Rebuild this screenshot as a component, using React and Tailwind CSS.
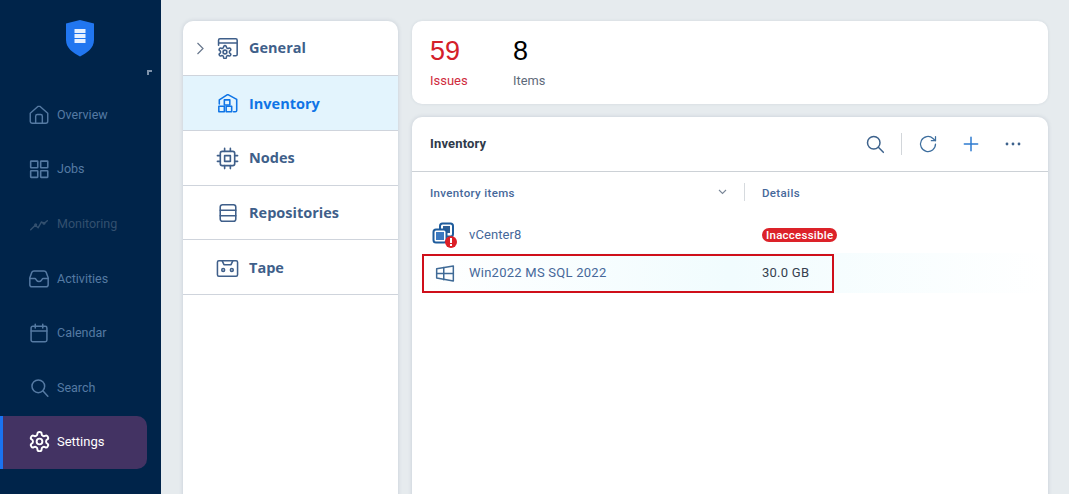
import React from "react";

const S = ({ children, size = 24, sw = 1.6, className = "" }) => (
  <svg width={size} height={size} viewBox="0 0 24 24" fill="none" stroke="currentColor" strokeWidth={sw} strokeLinecap="round" strokeLinejoin="round" className={className}>
    {children}
  </svg>
);

const GearPath = "M12.22 2h-.44a2 2 0 0 0-2 2v.18a2 2 0 0 1-1 1.73l-.43.25a2 2 0 0 1-2 0l-.15-.08a2 2 0 0 0-2.73.73l-.22.38a2 2 0 0 0 .73 2.73l.15.1a2 2 0 0 1 1 1.72v.51a2 2 0 0 1-1 1.74l-.15.09a2 2 0 0 0-.73 2.73l.22.38a2 2 0 0 0 2.73.73l.15-.08a2 2 0 0 1 2 0l.43.25a2 2 0 0 1 1 1.73V20a2 2 0 0 0 2 2h.44a2 2 0 0 0 2-2v-.18a2 2 0 0 1 1-1.73l.43-.25a2 2 0 0 1 2 0l.15.08a2 2 0 0 0 2.73-.73l.22-.39a2 2 0 0 0-.73-2.73l-.15-.08a2 2 0 0 1-1-1.74v-.5a2 2 0 0 1 1-1.74l.15-.09a2 2 0 0 0 .73-2.73l-.22-.38a2 2 0 0 0-2.73-.73l-.15.08a2 2 0 0 1-2 0l-.43-.25a2 2 0 0 1-1-1.73V4a2 2 0 0 0-2-2z";

const nav = [
  { label: "Overview", color: "text-[#557aa3]", icon: <S size={21} sw={1.7}><path d="M1.5 10.500 11 2.200h2l9.500 8.300V20a2.500 2.500 0 0 1-2.500 2.500H4A2.500 2.500 0 0 1 1.500 20z" /><path d="M8 22.500V14a2 2 0 0 1 2-2h4a2 2 0 0 1 2 2v8.500" /></S> },
  { label: "Jobs", color: "text-[#557aa3]", icon: <S size={20} sw={1.9}><rect x="2" y="2.500" width="8.500" height="8" rx=".6" /><rect x="14" y="2.500" width="8.500" height="8" rx=".6" /><rect x="2" y="14" width="8.500" height="8" rx=".6" /><rect x="14" y="14" width="8.500" height="8" rx=".6" /></S> },
  { label: "Monitoring", color: "text-[#33506f]", icon: <S size={20} sw={1.7}><path d="M2 19 7.500 13.500 11 16.500 15 9.500 18 11.500 22 8" /><circle cx="8" cy="13" r="1" /><circle cx="18" cy="11" r="1" /></S> },
  { label: "Activities", shift: "translate-y-px", color: "text-[#557aa3]", icon: <S size={21} sw={1.8}><path d="M6 3h12a3 3 0 0 1 2.700 1.700L23 11v8.500a2.500 2.500 0 0 1-2.500 2.500h-17A2.500 2.500 0 0 1 1 19.500V11l2.300-6.300A3 3 0 0 1 6 3z" /><path d="M1 12h6c1 0 1.300 1 2 2s1 1.500 3 1.500 2.300-.5 3-1.500 1-2 2-2h6" /></S> },
  { label: "Calendar", color: "text-[#557aa3]", icon: <S size={20} sw={1.8}><rect x="2.500" y="4" width="19" height="18.500" rx="2" /><path d="M2.500 9.500h19M7.500 1.500V6M16.500 1.500V6" /></S> },
  { label: "Search", shift: "translate-y-px", color: "text-[#557aa3]", icon: <S size={19} sw={1.9}><circle cx="10.500" cy="10.500" r="8" /><path d="m16.500 16.500 6 6.500" /></S> },
];

const Item = ({ label, color, icon, shift = "" }) => (
  <div className={`flex h-[54.6px] items-center pl-[29px] ${color}`}>
    <span className="flex w-[20px] justify-center">{icon}</span>
    <span className={`ml-[8px] text-[12.5px] ${shift}`}>{label}</span>
  </div>
);

const panelRows = [
  { label: "General", h: "h-[55px]", chevron: true, icon: <S size={22} sw={1.700}><path d="M1.700 9V3.500A1.500 1.500 0 0 1 3.200 2h17.300A1.500 1.500 0 0 1 22 3.500v15.500a1.500 1.500 0 0 1-1.500 1.500H18M1.700 6.500H22" /><g transform="translate(.3 8) scale(.7)" strokeWidth="2.400"><path d={GearPath} /><circle cx="12" cy="12" r="3" /></g></S> },
  { label: "Inventory", h: "h-[55px] pt-[2px]", active: true, icon: <S size={22} sw={1.700}><path d="M2.500 12V7.500L11 2h1.500L21.500 7v12a1.500 1.500 0 0 1-1.500 1.500H18" /><rect x="8" y="7.500" width="6" height="5.500" /><rect x="2" y="14.500" width="6" height="6" /><rect x="10" y="14.500" width="6" height="6" /></S> },
  { label: "Nodes", h: "h-[55px]", icon: <S size={23} sw={1.700}><rect x="4.500" y="4.500" width="15" height="15" rx="2" /><rect x="9" y="9" width="6" height="6" /><path d="M9 1.500v3M15 1.500v3M9 19.500v3M15 19.500v3M1.500 9h3M1.500 15h3M19.500 9h3M19.500 15h3" /></S> },
  { label: "Repositories", h: "h-[54px]", icon: <S size={22} sw={1.700}><rect x="3.500" y="3" width="17" height="18" rx="2.500" /><path d="M3.500 9h17M3.500 15h17" /></S> },
  { label: "Tape", h: "h-[55px] pt-[2px]", icon: <S size={23} sw={1.600}><rect x="1.500" y="4" width="21" height="16" rx="1.500" /><path d="m6.500 4 1.800 4h7.400l1.800-4" /><circle cx="7.500" cy="13.500" r="1.500" /><circle cx="16.500" cy="13.500" r="1.500" /></S> },
];

export default function App() {
  return (
    <div className="flex h-[494px] w-[1069px] overflow-hidden bg-[#e6ebee] font-['Roboto',sans-serif]">
      <aside className="flex h-full w-[161px] shrink-0 flex-col bg-[#00244a]">
        <div className="relative h-[87.6px] shrink-0">
          <svg width="30" height="37" viewBox="0 0 30 37" className="absolute left-[65px] top-[20px]">
            <path d="M15 0 29 3.500V20C29 28 22 33 15 36.500 8 33 1 28 1 20V3.500z" fill="#2176f0" />
            <rect x="9.500" y="9" width="11" height="4" fill="#e6f0ff" />
            <rect x="9.500" y="14" width="11" height="4" fill="#e6f0ff" />
            <rect x="9.500" y="19" width="11" height="4" fill="#e6f0ff" />
          </svg>
          <div className="absolute left-[147px] top-[70px] h-[5px] w-[5px] border-l-2 border-t-2 border-[#7f93ab]" />
        </div>
        {nav.map((n) => <Item key={n.label} {...n} />)}
        <div className="mt-[0.8px] flex h-[53px] w-[147px] items-center rounded-r-[10px] border-l-[3px] border-[#1a73f0] bg-[#433363] pb-[2px] pl-[25px] text-white">
          <S size={23} sw={2}><path d={GearPath} /><circle cx="12" cy="12" r="3" /></S>
          <span className="ml-[6px] text-[13px]">Settings</span>
        </div>
      </aside>

      <main className="flex flex-1 gap-[14px] pl-[22px] pr-[21px] pt-[21px]">
        <section className="h-[500px] w-[215px] shrink-0 overflow-hidden rounded-t-[10px] bg-white shadow-[0_0_4px_rgba(60,80,110,0.18)]">
          {panelRows.map((r) => (
            <div key={r.label} className={`relative flex items-center border-b border-[#cfd4dc] pl-[33px] ${r.h} ${r.active ? "bg-[#e3f4fd] text-[#0f74e6]" : "text-[#3f5f8a]"}`}>
              {r.chevron && (
                <svg width="9" height="13" viewBox="0 0 9 13" className="absolute left-[13px] top-[21px] text-[#67768c]" fill="none" stroke="currentColor" strokeWidth="1.200"><path d="m1.500 1 5.500 5.500L1.500 12" /></svg>
              )}
              <span className="flex w-[23px] justify-center">{r.icon}</span>
              <span className="ml-[10px] font-['Open_Sans',sans-serif] text-[14.5px] font-bold">{r.label}</span>
            </div>
          ))}
        </section>

        <div className="flex min-w-0 flex-1 flex-col gap-[13px]">
          <section className="flex h-[83px] shrink-0 rounded-[10px] bg-white pl-[18px] pt-[13px] shadow-[0_0_3px_rgba(60,80,110,0.12)]">
            <div className="w-[83px]">
              <div className="font-['Liberation_Sans',sans-serif] text-[27px] leading-[34px] text-[#d4202a]">59</div>
              <div className="mt-[5px] text-[13px] leading-[16px] text-[#cf2a3c]">Issues</div>
            </div>
            <div>
              <div className="font-['Liberation_Sans',sans-serif] text-[27px] leading-[34px] text-black">8</div>
              <div className="mt-[5px] text-[12.8px] leading-[16px] text-[#5e6a7a]">Items</div>
            </div>
          </section>

          <section className="relative h-[400px] shrink-0 rounded-t-[10px] bg-white shadow-[0_0_4px_rgba(60,80,110,0.18)]">
            <div className="flex h-[55px] items-center border-b border-[#ccd1d6] pl-[18px] pr-[27px]">
              <span className="text-[13px] font-bold tracking-[0.15px] text-[#2f3a4a]">Inventory</span>
              <div className="ml-auto flex items-center">
                <S size={20} sw={1.800} className="-translate-x-px text-[#3d628c]"><circle cx="10.500" cy="10.500" r="7.500" /><path d="m16 16 6 6" /></S>
                <div className="ml-[15px] h-[22px] w-px bg-[#d2d6da]" />
                <S size={20} sw={1.500} className="ml-[16px] text-[#3d6e9e]"><path d="M21 12a9 9 0 1 1-3-6.700L21 8" /><path d="M21 3v5h-5" /></S>
                <S size={20} sw={1.800} className="ml-[23px] text-[#2e7bd0]"><path d="M12 4v16M4 12h16" /></S>
                <svg width="16" height="4" viewBox="0 0 16 4" className="ml-[24px] text-[#3d628c]" fill="currentColor"><circle cx="2" cy="2" r="1.400" /><circle cx="8" cy="2" r="1.400" /><circle cx="14" cy="2" r="1.400" /></svg>
              </div>
            </div>

            <div className="flex h-[44px] items-center text-[11.5px] font-medium tracking-[0.35px] text-[#46689a]">
              <span className="ml-[18px] w-[288px]">Inventory items</span>
              <svg width="9" height="6" viewBox="0 0 9 6" className="mb-[5px] text-[#7a8798]" fill="none" stroke="currentColor" strokeWidth="1.100"><path d="m1 1 3.500 3.500L8 1" /></svg>
              <div className="mb-[5px] ml-[17px] h-[18px] w-px bg-[#d6dade]" />
              <span className="ml-[17px]">Details</span>
            </div>

            <div className="flex h-[37px] items-center text-[13px] tracking-[0.1px]">
              <svg width="26" height="26" viewBox="0 0 26 26" className="ml-[20px]">
                <rect x="8" y="1.500" width="13" height="13" rx="2.500" fill="#fff" stroke="#1f5c9c" strokeWidth="2" />
                <rect x="11" y="4" width="7" height="7" fill="#2d5f96" />
                <rect x="1.500" y="7.500" width="13" height="13" rx="2.500" fill="#fff" stroke="#1f5c9c" strokeWidth="2" />
                <rect x="4" y="10" width="8" height="8" fill="#3a78c0" />
                <circle cx="19" cy="20" r="6" fill="#dc1f26" />
                <rect x="18" y="16" width="2" height="5" fill="#fff" />
                <rect x="18" y="22" width="2" height="2" fill="#fff" />
              </svg>
              <span className="ml-[11px] w-[293px] text-[#46689a]">vCenter8</span>
              <span className="rounded-full bg-[#dc2229] px-[4px] text-[11.5px] font-medium leading-[14px] tracking-[0.25px] text-white">Inaccessible</span>
            </div>

            <div className="flex h-[40px] items-center bg-gradient-to-r from-white via-[#f1fcfe] to-white text-[13px] tracking-[0.25px]">
              <S size={20} sw={1.800} className="ml-[23px] text-[#3f6a96]"><path d="M2 7 22 3.500v18L2 18z" /><path d="M2 12.500h20M10.500 5.500v14.500" /></S>
              <span className="ml-[14px] w-[293px] text-[#46689a]">Win2022 MS SQL 2022</span>
              <span className="text-[#35404e]">30.0 GB</span>
            </div>

            <div className="absolute left-[10px] top-[137px] h-[39px] w-[412px] border-2 border-[#cf0f1a]" />
          </section>
        </div>
      </main>
    </div>
  );
}
